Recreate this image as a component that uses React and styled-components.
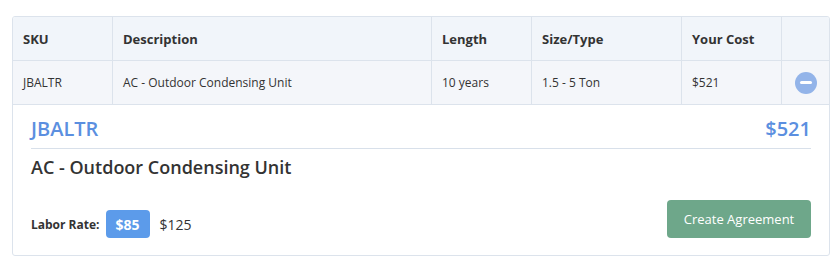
import React from "react";
import styled, { createGlobalStyle } from "styled-components";

const Global = createGlobalStyle`
  html, body { margin: 0; padding: 0; background: #fff; }
  body { font-family: "Open Sans", "Noto Sans", sans-serif; color: #333; }
  * { box-sizing: border-box; }
`;

const Page = styled.div`
  padding: 16px 6px 0 12px;
`;

const Card = styled.div`
  border: 1px solid #dce3ec;
  border-radius: 3px;
  overflow: hidden;
  background: #fff;
`;

const Row = styled.div`
  display: grid;
  grid-template-columns: 100px 319px 100px 150px 100px 1fr;
  background: ${(p) => (p.$head ? "#f1f5fa" : "#f4f6fa")};
`;

const Cell = styled.div`
  height: 44px;
  display: flex;
  align-items: center;
  justify-content: ${(p) => (p.$center ? "center" : "flex-start")};
  padding: 0 10px;
  border-bottom: 1px solid #dce3ec;
  border-right: ${(p) => (p.$last ? "none" : "1px solid #dce3ec")};
  font-size: ${(p) => (p.$head ? "13px" : "12px")};
  font-weight: ${(p) => (p.$head ? 700 : 400)};
  color: #333;
  white-space: nowrap;
`;

const RemoveButton = styled.button`
  width: 22px;
  height: 22px;
  border-radius: 50%;
  border: none;
  padding: 0;
  background: #93b4e9;
  display: flex;
  align-items: center;
  justify-content: center;
  cursor: pointer;
  &::after {
    content: "";
    width: 12px;
    height: 3px;
    border-radius: 1.5px;
    background: #fff;
  }
`;

const Panel = styled.div`
  padding: 10px 18px 17px;
`;

const TitleRow = styled.div`
  display: flex;
  justify-content: space-between;
  align-items: center;
  border-bottom: 1px solid #d8e0ea;
  padding-bottom: 6px;
`;

const Sku = styled.div`
  font-size: 20px;
  font-weight: 600;
  line-height: 27px;
  color: #5b8fe0;
`;

const Desc = styled.div`
  margin-top: 6px;
  font-size: 18px;
  font-weight: 600;
  line-height: 25px;
  color: #333;
`;

const BottomRow = styled.div`
  margin-top: 20px;
  display: flex;
  justify-content: space-between;
  align-items: flex-end;
`;

const Labor = styled.div`
  display: flex;
  align-items: center;
  gap: 6px;
`;

const LaborLabel = styled.span`
  font-size: 12px;
  font-weight: 700;
  color: #333;
`;

const Badge = styled.span`
  width: 44px;
  height: 28px;
  border-radius: 4px;
  background: #5c9bea;
  color: #fff;
  font-size: 14px;
  font-weight: 700;
  display: flex;
  align-items: center;
  justify-content: center;
`;

const Rate = styled.span`
  margin-left: 4px;
  font-size: 14px;
  color: #333;
`;

const CreateButton = styled.button`
  width: 144px;
  height: 38px;
  border: none;
  border-radius: 4px;
  background: #6ea78a;
  color: #fff;
  font-family: inherit;
  font-size: 13px;
  cursor: pointer;
`;

const headers = ["SKU", "Description", "Length", "Size/Type", "Your Cost"];
const values = ["JBALTR", "AC - Outdoor Condensing Unit", "10 years", "1.5 - 5 Ton", "$521"];

export default function App() {
  return (
    <>
      <Global />
      <Page>
        <Card>
          <Row $head>
            {headers.map((h) => (
              <Cell key={h} $head>{h}</Cell>
            ))}
            <Cell $head $last />
          </Row>
          <Row>
            {values.map((v) => (
              <Cell key={v}>{v}</Cell>
            ))}
            <Cell $last $center>
              <RemoveButton aria-label="Remove" />
            </Cell>
          </Row>
          <Panel>
            <TitleRow>
              <Sku>JBALTR</Sku>
              <Sku>$521</Sku>
            </TitleRow>
            <Desc>AC - Outdoor Condensing Unit</Desc>
            <BottomRow>
              <Labor>
                <LaborLabel>Labor Rate:</LaborLabel>
                <Badge>$85</Badge>
                <Rate>$125</Rate>
              </Labor>
              <CreateButton>Create Agreement</CreateButton>
            </BottomRow>
          </Panel>
        </Card>
      </Page>
    </>
  );
}
